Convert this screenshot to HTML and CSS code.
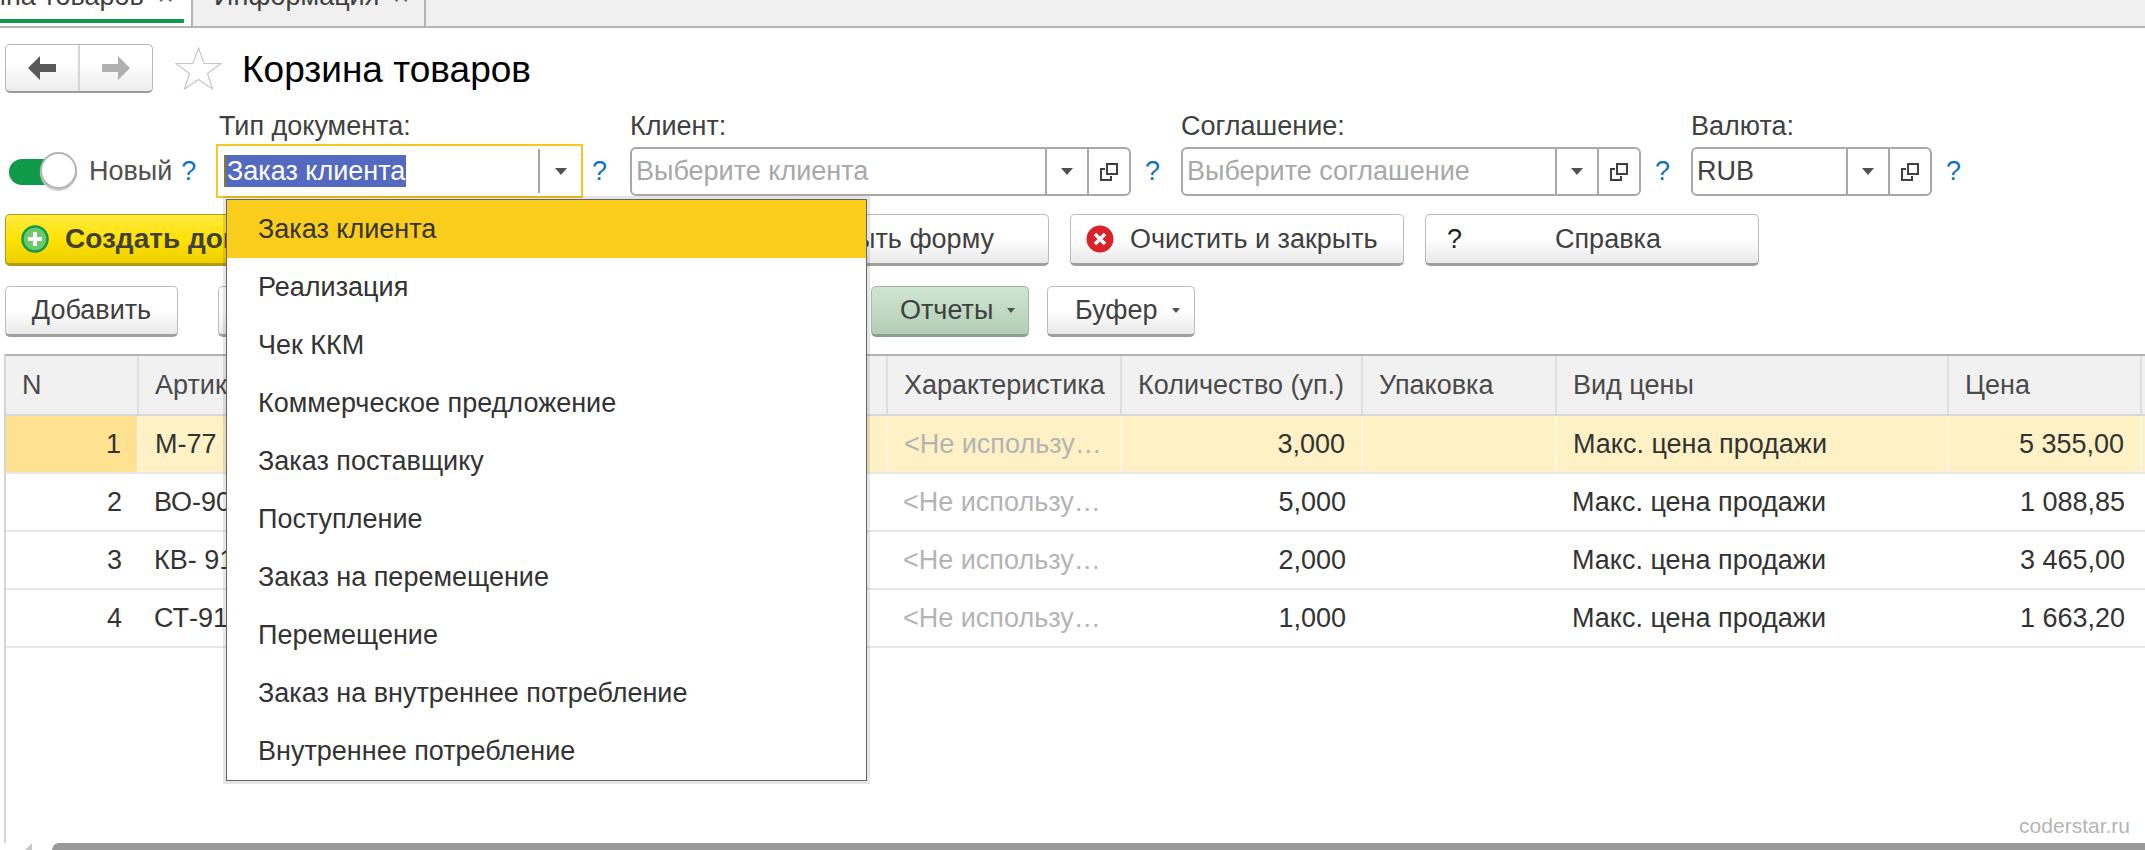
FILE: index.html
```html
<!DOCTYPE html>
<html lang="ru">
<head>
    <meta charset="UTF-8">
    <title>Корзина товаров</title>
    <link rel="stylesheet" href="styles.css">
</head>
<body>
    <div class="tabs">
        <div class="tab tab-active"><span class="tab-text">Корзина товаров</span><span class="tab-close">×</span></div>
        <div class="tab tab-second"><span class="tab-text">Информация</span><span class="tab-close">×</span></div>
    </div>

    <div class="title-row">
        <div class="nav-buttons">
            <div class="nav-btn nav-back">
                <svg width="28" height="24" viewBox="0 0 28 24"><path d="M0 12 L12 0 V8 H28 V16 H12 V24 Z" fill="#595959"/></svg>
            </div>
            <div class="nav-btn nav-forward">
                <svg width="28" height="24" viewBox="0 0 28 24"><path d="M28 12 L16 0 V8 H0 V16 H16 V24 Z" fill="#b0b0b0"/></svg>
            </div>
        </div>
        <svg class="star" width="47" height="43" viewBox="0 0 47 43"><path d="M23.5 1 L29 16.5 H46 L32.500 26.500 L37.500 42 L23.5 32.500 L9.500 42 L14.500 26.500 L1 16.500 H18 Z" fill="#fff" stroke="#c6c6c6" stroke-width="1.2"/></svg>
        <h1>Корзина товаров</h1>
    </div>

    <div class="form-row">
        <div class="switch-group">
            <div class="switch"><div class="switch-thumb"></div></div>
            <span class="switch-label">Новый</span>
            <span class="hint">?</span>
        </div>
        <div class="field field-type">
            <label>Тип документа:</label>
            <div class="field-line">
                <div class="input input-focus">
                    <div class="input-text"><span class="selected">Заказ клиента</span></div>
                    <div class="input-btn"><span class="arrow"></span></div>
                </div>
                <span class="hint">?</span>
            </div>
        </div>
        <div class="field field-client">
            <label>Клиент:</label>
            <div class="field-line">
                <div class="input">
                    <div class="input-text placeholder">Выберите клиента</div>
                    <div class="input-btn"><span class="arrow"></span></div>
                    <div class="input-btn"><svg class="copy-icon" width="18" height="18" viewBox="0 0 18 18"><path d="M7 1 H17 V11 H7 Z M5 6 H1 V17 H11 V13" fill="none" stroke="#404040" stroke-width="2"/></svg></div>
                </div>
                <span class="hint">?</span>
            </div>
        </div>
        <div class="field field-agreement">
            <label>Соглашение:</label>
            <div class="field-line">
                <div class="input">
                    <div class="input-text placeholder">Выберите соглашение</div>
                    <div class="input-btn"><span class="arrow"></span></div>
                    <div class="input-btn"><svg class="copy-icon" width="18" height="18" viewBox="0 0 18 18"><path d="M7 1 H17 V11 H7 Z M5 6 H1 V17 H11 V13" fill="none" stroke="#404040" stroke-width="2"/></svg></div>
                </div>
                <span class="hint">?</span>
            </div>
        </div>
        <div class="field field-currency">
            <label>Валюта:</label>
            <div class="field-line">
                <div class="input">
                    <div class="input-text">RUB</div>
                    <div class="input-btn"><span class="arrow"></span></div>
                    <div class="input-btn"><svg class="copy-icon" width="18" height="18" viewBox="0 0 18 18"><path d="M7 1 H17 V11 H7 Z M5 6 H1 V17 H11 V13" fill="none" stroke="#404040" stroke-width="2"/></svg></div>
                </div>
                <span class="hint">?</span>
            </div>
        </div>
    </div>

    <div class="button-row">
        <button class="btn btn-create">
            <svg width="28" height="28" viewBox="0 0 28 28"><circle cx="14" cy="14" r="12.500" fill="#6cc96c" stroke="#149a48" stroke-width="2.500"/><path d="M14 7 V21 M7 14 H21" stroke="#fff" stroke-width="4"/></svg>
            Создать документ
        </button>
        <button class="btn btn-close-form">Закрыть форму</button>
        <button class="btn btn-clear">
            <svg width="28" height="28" viewBox="0 0 28 28"><circle cx="14" cy="14" r="13.500" fill="#d9232b"/><path d="M9 9 L19 19 M19 9 L9 19" stroke="#fff" stroke-width="3.500"/></svg>
            Очистить и закрыть
        </button>
        <button class="btn btn-help"><span class="help-mark">?</span><span class="help-text">Справка</span></button>
    </div>

    <div class="toolbar">
        <button class="btn tool-add">Добавить</button>
        <button class="btn tool-hidden"></button>
        <button class="btn tool-reports">Отчеты<span class="arrow arrow-small"></span></button>
        <button class="btn tool-buffer">Буфер<span class="arrow arrow-small"></span></button>
    </div>

    <div class="grid-wrap">
        <table class="grid">
            <colgroup>
                <col class="col-n">
                <col class="col-art">
                <col class="col-char">
                <col class="col-qty">
                <col class="col-pack">
                <col class="col-kind">
                <col class="col-price">
                <col class="col-rest">
            </colgroup>
            <thead>
                <tr>
                    <th>N</th>
                    <th>Артикул</th>
                    <th>Характеристика</th>
                    <th>Количество (уп.)</th>
                    <th>Упаковка</th>
                    <th>Вид цены</th>
                    <th>Цена</th>
                    <th></th>
                </tr>
            </thead>
            <tbody>
                <tr class="row-current">
                    <td class="num cell-n">1</td>
                    <td>М-77</td>
                    <td class="muted">&lt;Не использу…</td>
                    <td class="num">3,000</td>
                    <td></td>
                    <td>Макс. цена продажи</td>
                    <td class="num">5 355,00</td>
                    <td></td>
                </tr>
                <tr>
                    <td class="num cell-n">2</td>
                    <td>ВО-90</td>
                    <td class="muted">&lt;Не использу…</td>
                    <td class="num">5,000</td>
                    <td></td>
                    <td>Макс. цена продажи</td>
                    <td class="num">1 088,85</td>
                    <td></td>
                </tr>
                <tr>
                    <td class="num cell-n">3</td>
                    <td>КВ- 91</td>
                    <td class="muted">&lt;Не использу…</td>
                    <td class="num">2,000</td>
                    <td></td>
                    <td>Макс. цена продажи</td>
                    <td class="num">3 465,00</td>
                    <td></td>
                </tr>
                <tr>
                    <td class="num cell-n">4</td>
                    <td>СТ-91</td>
                    <td class="muted">&lt;Не использу…</td>
                    <td class="num">1,000</td>
                    <td></td>
                    <td>Макс. цена продажи</td>
                    <td class="num">1 663,20</td>
                    <td></td>
                </tr>
            </tbody>
        </table>
        <div class="watermark">coderstar.ru</div>
    </div>

    <div class="scrollbar">
        <span class="scroll-arrow"></span>
        <div class="scroll-thumb"></div>
    </div>

    <ul class="dropdown">
        <li class="dropdown-active">Заказ клиента</li>
        <li>Реализация</li>
        <li>Чек ККМ</li>
        <li>Коммерческое предложение</li>
        <li>Заказ поставщику</li>
        <li>Поступление</li>
        <li>Заказ на перемещение</li>
        <li>Перемещение</li>
        <li>Заказ на внутреннее потребление</li>
        <li>Внутреннее потребление</li>
    </ul>
</body>
</html>
```
FILE: styles.css
```css
* {
    box-sizing: border-box;
}
html, body {
    margin: 0;
    height: 850px;
    overflow: hidden;
}
body {
    position: relative;
    display: flex;
    flex-direction: column;
    font-family: "Liberation Sans", Arial, sans-serif;
    font-size: 27px;
    color: #404040;
    background-color: #fff;
}

/* tabs, cut off by the top and left edge of the picture */
.tabs {
    display: flex;
    flex: none;
    height: 28px;
    background-color: #f0f0f0;
    border-bottom: 2px solid #b4b4b4;
    overflow: hidden;
}
.tab {
    display: flex;
    align-items: flex-end;
    height: 26px;
    padding-bottom: 16px;
    border-right: 2px solid #b4b4b4;
}
.tab-text {
    line-height: 28px;
    white-space: nowrap;
}
.tab-close {
    margin-left: 14px;
    line-height: 28px;
    color: #606060;
}
.tab-active {
    flex: none;
    width: 260px;
    margin-left: -67px;
    background-color: #fff;
    position: relative;
}
.tab-active::after {
    content: "";
    position: absolute;
    left: 0;
    right: 7px;
    bottom: 3px;
    height: 4px;
    background-color: #0e9a48;
}
.tab-second {
    flex: none;
    width: 233px;
    padding-left: 21px;
}

/* title */
.title-row {
    display: flex;
    flex: none;
    align-items: center;
    height: 49px;
    margin-top: 16px;
    padding-left: 5px;
}
.nav-buttons {
    display: flex;
    width: 148px;
    height: 49px;
    border: 1px solid #b8b8b8;
    border-bottom: 2px solid #9a9a9a;
    border-radius: 5px;
    background: linear-gradient(#fff 40%, #ececec);
}
.nav-btn {
    display: flex;
    align-items: center;
    justify-content: center;
    flex: 1;
}
.nav-back {
    border-right: 2px solid #d6d6d6;
}
.star {
    margin-left: 22px;
}
h1 {
    margin: 2px 0 0 20px;
    font-size: 37px;
    font-weight: normal;
    color: #000;
}

/* form fields */
.form-row {
    display: flex;
    flex: none;
    align-items: flex-end;
    height: 80px;
    margin-top: 23px;
    padding-left: 9px;
}
.switch-group {
    display: flex;
    align-items: center;
    width: 207px;
    height: 49px;
}
.switch {
    position: relative;
    width: 68px;
    height: 26px;
    border-radius: 13px;
    background-color: #0e9a48;
}
.switch-thumb {
    position: absolute;
    right: 0;
    top: -7px;
    width: 37px;
    height: 37px;
    border-radius: 50%;
    background-color: #fff;
    border: 2px solid #b4b4b4;
    box-shadow: 0 2px 1px #ccc;
}
.switch-label {
    margin-left: 12px;
    color: #505050;
}
.hint {
    margin-left: 14px;
    color: #0a72c2;
}
.switch-group .hint {
    margin-left: 9px;
}
.field label {
    display: block;
    margin-bottom: 7px;
    margin-left: 3px;
    line-height: 27px;
}
.field-client label, .field-agreement label, .field-currency label {
    margin-left: 0;
}
.field-line {
    display: flex;
    align-items: center;
}
.input {
    display: flex;
    height: 49px;
    border: 2px solid #a8a8a8;
    border-radius: 6px;
    background-color: #fff;
}
.input-text {
    display: flex;
    align-items: center;
    flex: 1;
    padding-left: 4px;
    color: #404040;
    overflow: hidden;
    white-space: nowrap;
}
.placeholder {
    color: #a8a8a8;
}
.input-btn {
    display: flex;
    align-items: center;
    justify-content: center;
    width: 42px;
    border-left: 2px solid #a8a8a8;
}
.arrow {
    display: inline-block;
    width: 0;
    height: 0;
    border-left: 6px solid transparent;
    border-right: 6px solid transparent;
    border-top: 7px solid #505050;
}
.arrow-small {
    margin-left: 14px;
    border-left-width: 4px;
    border-right-width: 4px;
    border-top-width: 5px;
}
.input-focus {
    height: 54px;
    margin-top: -3px;
    margin-bottom: -2px;
    border: 2px solid #f7c91f;
    border-radius: 0;
}
.input-focus .input-text {
    padding-left: 6px;
}
.input-focus .input-btn {
    width: 43px;
    margin: 3px 0;
}
.selected {
    padding: 0 1px;
    line-height: 32px;
    background-color: #5469c0;
    color: #fff;
    border-left: 2px solid #8a7a30;
}
.field-type {
    width: 414px;
}
.field-type .input { width: 367px; }
.field-type .hint { margin-left: 9px; }
.field-client {
    width: 551px;
}
.field-client .input { width: 501px; }
.field-agreement {
    width: 510px;
}
.field-agreement .input { width: 460px; }
.field-currency .input { width: 241px; }

/* buttons */
.btn {
    display: flex;
    align-items: center;
    justify-content: center;
    flex: none;
    padding: 0;
    font-family: inherit;
    font-size: 27px;
    color: #404040;
    border: 1px solid #bcbcbc;
    border-bottom: 3px solid #a0a0a0;
    border-radius: 5px;
    background: linear-gradient(#fff 50%, #e9e9e9);
}
.button-row {
    display: flex;
    flex: none;
    height: 52px;
    margin-top: 18px;
    padding-left: 5px;
}
.btn-create {
    justify-content: flex-start;
    width: 540px;
    padding-left: 15px;
    font-size: 28px;
    font-weight: bold;
    white-space: nowrap;
    border-color: #b09a10;
    background: linear-gradient(#ffeb3e, #ffe100 55%, #edcf00);
}
.btn-create svg {
    margin-right: 16px;
}
.btn-close-form {
    justify-content: flex-end;
    width: 464px;
    margin-left: 40px;
    padding-right: 54px;
}
.btn-clear {
    justify-content: flex-start;
    width: 334px;
    margin-left: 21px;
    padding-left: 15px;
}
.btn-clear svg {
    margin-right: 16px;
}
.btn-help {
    justify-content: flex-start;
    width: 334px;
    margin-left: 21px;
    padding-left: 21px;
    text-align: left;
}
.help-mark {
    width: 108px;
    color: #202020;
}
.toolbar {
    display: flex;
    flex: none;
    height: 51px;
    margin-top: 20px;
    padding-left: 5px;
}
.tool-add {
    width: 173px;
}
.tool-hidden {
    width: 500px;
    margin-left: 40px;
}
.tool-reports {
    justify-content: flex-start;
    width: 158px;
    margin-left: 153px;
    padding-left: 28px;
    border-color: #a3b8a4;
    border-bottom-color: #8d9f8e;
    background: linear-gradient(#d0e5d1, #b3ceb4);
}
.tool-buffer {
    justify-content: flex-start;
    width: 148px;
    margin-left: 18px;
    padding-left: 27px;
}

/* table */
.grid-wrap {
    position: relative;
    flex: 1;
    min-height: 0;
    margin-top: 17px;
    margin-left: 4px;
    border-left: 2px solid #d4d4d4;
    border-top: 2px solid #b4b4b4;
    overflow: hidden;
}
.grid {
    width: 2150px;
    table-layout: fixed;
    border-collapse: collapse;
}
.col-n { width: 132px; }
.col-art { width: 749px; }
.col-char { width: 234px; }
.col-qty { width: 241px; }
.col-pack { width: 194px; }
.col-kind { width: 392px; }
.col-price { width: 193px; }
.col-rest { width: 15px; }
.grid th {
    height: 59px;
    padding: 0 16px;
    font-weight: normal;
    text-align: left;
    white-space: nowrap;
    overflow: hidden;
    color: #4a4a4a;
    background-color: #f1f1f1;
    border-right: 2px solid #dedede;
    border-bottom: 2px solid #d8d8d8;
}
.grid td {
    height: 58px;
    padding: 0 16px;
    white-space: nowrap;
    overflow: hidden;
    border-bottom: 2px solid #e8e8e8;
    color: #333;
}
.grid .num {
    text-align: right;
}
.row-current td {
    background-color: #fef1c6;
    border-right: 2px solid #fdf7e2;
}
.row-current .cell-n {
    background-color: #fee291;
}
.grid .muted {
    color: #b4b4b4;
}
.watermark {
    position: absolute;
    right: 15px;
    bottom: 5px;
    font-size: 21px;
    color: #b4b4b4;
}

/* scrollbar at the bottom */
.scrollbar {
    display: flex;
    align-items: flex-end;
    flex: none;
    height: 7px;
    padding-left: 25px;
    border-left: 0;
}
.scroll-arrow {
    width: 0;
    height: 0;
    border-bottom: 7px solid #c8c8c8;
    border-left: 7px solid transparent;
}
.scroll-thumb {
    flex: 1;
    height: 7px;
    margin-left: 20px;
    border-radius: 7px 0 0 0;
    background-color: #999;
}

/* popup list, lies over the form */
.dropdown {
    position: absolute;
    left: 226px;
    top: 199px;
    width: 641px;
    margin: 0;
    padding: 0;
    list-style: none;
    background-color: #fff;
    border: 1px solid #666;
    box-shadow: 0 0 0 3px rgba(0, 0, 0, 0.1);
}
.dropdown li {
    height: 58px;
    padding-left: 31px;
    line-height: 58px;
    color: #333;
}
.dropdown .dropdown-active {
    background-color: #facd1c;
}
```
